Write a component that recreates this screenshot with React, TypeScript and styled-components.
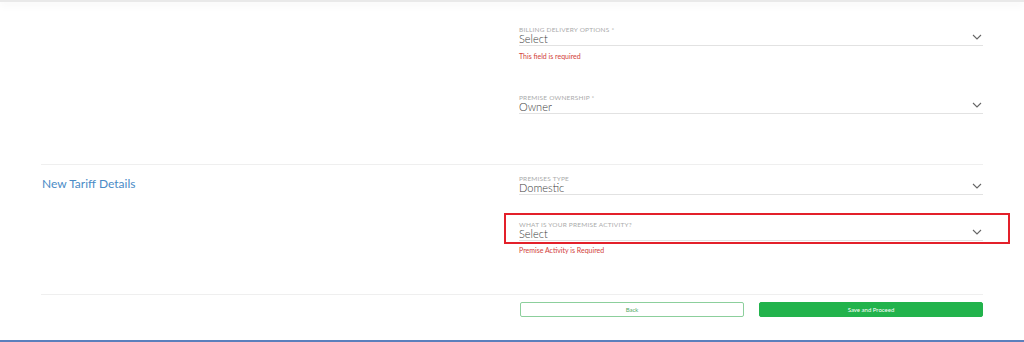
import styled, { createGlobalStyle } from "styled-components";

const GlobalStyle = createGlobalStyle`
  html, body {
    margin: 0;
    padding: 0;
    background: #fff;
    font-family: "Lato", "Open Sans", sans-serif;
  }
`;

const Page = styled.div`
  height: 342px;
  display: flex;
  flex-direction: column;
  overflow: hidden;
  position: relative;
`;

const TopShadow = styled.div`
  height: 2px;
  background: #e9e9e9;
  box-shadow: 0 2px 8px rgba(0, 0, 0, 0.1);
`;

const Content = styled.div`
  flex: 1;
  padding: 0 41px;
`;

const Section = styled.div<{ $top: number; $bottom: number; $line?: boolean }>`
  display: grid;
  grid-template-columns: 478px 1fr;
  padding-top: ${(p) => p.$top}px;
  padding-bottom: ${(p) => p.$bottom}px;
  border-top: ${(p) => (p.$line ? "1px solid #efefef" : "none")};
`;

const SectionTitle = styled.div`
  padding-top: 1px;
  padding-left: 1px;
  font-size: 12px;
  line-height: 16px;
  color: #4a8bc6;
`;

const Column = styled.div`
  display: flex;
  flex-direction: column;
`;

const Field = styled.div<{ $gap?: number }>`
  margin-top: ${(p) => p.$gap ?? 0}px;
  position: relative;
  border-bottom: 1px solid #e2e2e2;
  padding-bottom: 1px;
`;

const Label = styled.div`
  font-size: 6.5px;
  line-height: 7px;
  letter-spacing: 0.2px;
  color: #ababab;
  text-transform: uppercase;
`;

const Value = styled.div`
  font-size: 11px;
  line-height: 11px;
  font-weight: 300;
  color: #3a3a3a;
`;

const Chevron = styled.svg`
  position: absolute;
  right: 1px;
  bottom: 5px;
`;

const ErrorText = styled.div<{ $gap: number }>`
  margin-top: ${(p) => p.$gap}px;
  font-size: 7px;
  line-height: 9px;
  color: #d2413a;
`;

const Highlight = styled.div`
  margin: 18px -27px 0 -15px;
  padding: 6px 25px 1px 13px;
  border: 2px solid #e3202a;
`;

const Footer = styled.div`
  border-top: 1px solid #efefef;
  padding-top: 7px;
  display: grid;
  grid-template-columns: 478px 1fr;
`;

const Buttons = styled.div`
  display: grid;
  grid-template-columns: 1fr 1fr;
  gap: 15px;
  padding-left: 1px;
`;

const Button = styled.button<{ $primary?: boolean }>`
  height: 15px;
  padding: 0;
  border-radius: 2px;
  font-family: inherit;
  font-size: 6px;
  border: 1px solid ${(p) => (p.$primary ? "#22b34c" : "#8ccf9c")};
  background: ${(p) => (p.$primary ? "#22b34c" : "#fff")};
  color: ${(p) => (p.$primary ? "#fff" : "#4fa866")};
`;

const BottomLine = styled.div`
  height: 2px;
  background: #5b80bd;
`;

function Arrow() {
  return (
    <Chevron width="10" height="6" viewBox="0 0 10 6">
      <path d="M1 1 L5 5 L9 1" fill="none" stroke="#666" strokeWidth="1.1" />
    </Chevron>
  );
}

function SelectField({ label, value, gap }: { label: string; value: string; gap?: number }) {
  return (
    <Field $gap={gap}>
      <Label>{label}</Label>
      <Value>{value}</Value>
      <Arrow />
    </Field>
  );
}

export default function App() {
  return (
    <Page>
      <GlobalStyle />
      <TopShadow />
      <Content>
        <Section $top={24} $bottom={50}>
          <div />
          <Column>
            <SelectField label="Billing Delivery Options *" value="Select" />
            <ErrorText $gap={6}>This field is required</ErrorText>
            <SelectField label="Premise Ownership *" value="Owner" gap={33} />
          </Column>
        </Section>
        <Section $top={10} $bottom={39} $line>
          <SectionTitle>New Tariff Details</SectionTitle>
          <Column>
            <SelectField label="Premises Type" value="Domestic" />
            <Highlight>
              <SelectField label="What is your premise activity?" value="Select" />
            </Highlight>
            <ErrorText $gap={2}>Premise Activity is Required</ErrorText>
          </Column>
        </Section>
        <Footer>
          <div />
          <Buttons>
            <Button>Back</Button>
            <Button $primary>Save and Proceed</Button>
          </Buttons>
        </Footer>
      </Content>
      <BottomLine />
    </Page>
  );
}
